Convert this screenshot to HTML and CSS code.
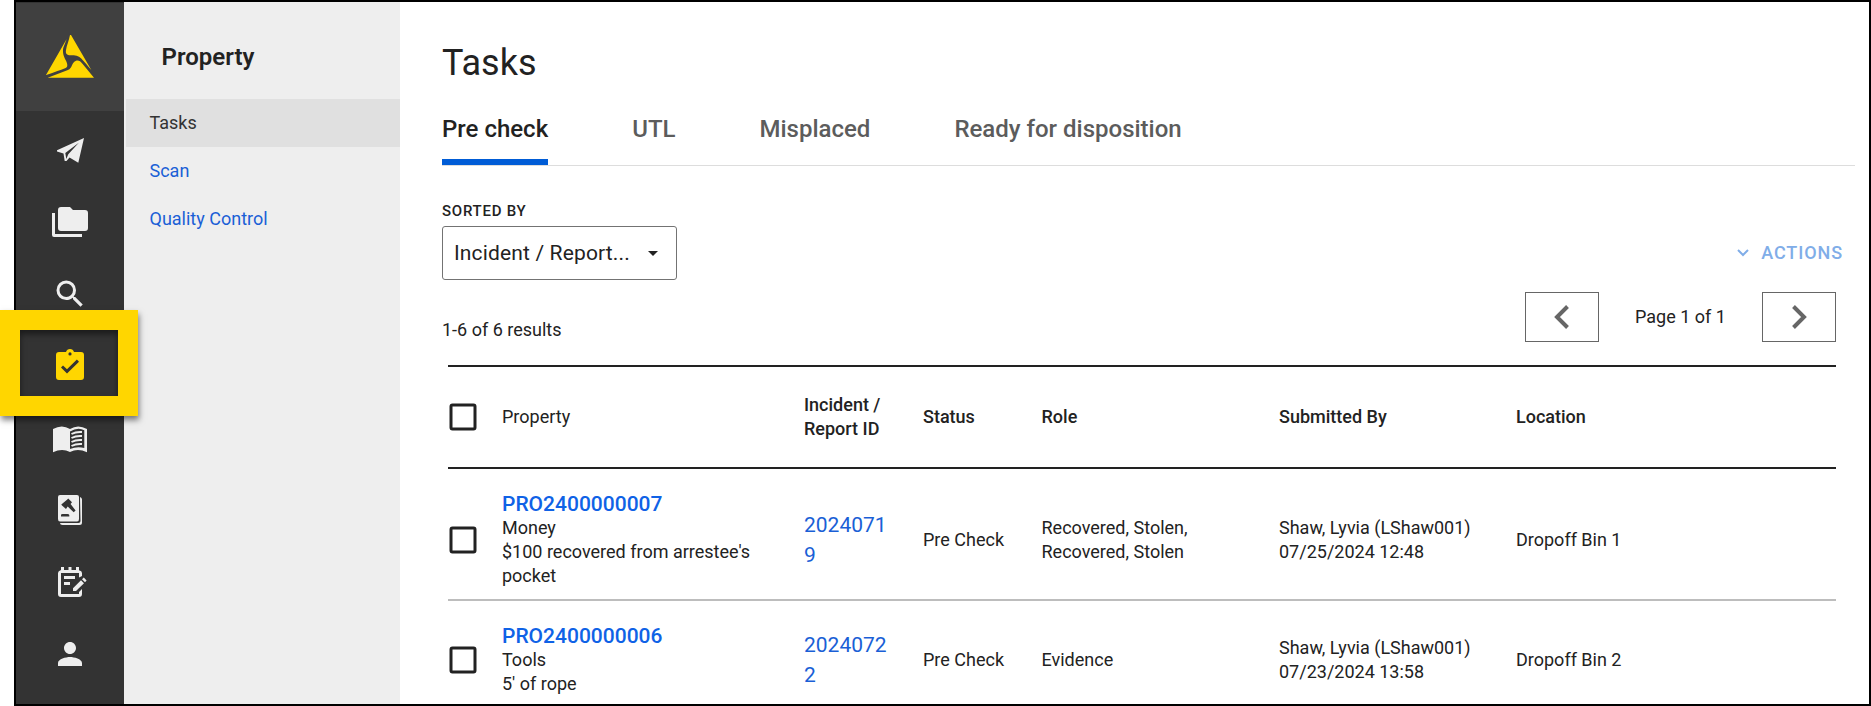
FILE: index.html
```html
<!DOCTYPE html>
<html lang="en">
<head>
<meta charset="utf-8">
<title>Property - Tasks</title>
<link rel="stylesheet" href="styles.css">
</head>
<body>
<div class="window">
  <nav class="rail">
    <div class="logo">
      <svg width="48" height="43" viewBox="138 105 144 129"><path d="M200 117L138 225Q141 225 197 204C204 200 203 193 198 182C189 167 186 150 192 138Z"/><path d="M213 105L274 210C262 198 252 183 243 175C236 167 225 166 212 166C200 166 196 160 198 150C200 137 207 122 210 105Z"/><path d="M143 233.500H282L248 192C241 183 236 180 228 182C220 185 217 193 214 200C211 206 207 209 198 212Z"/></svg>
    </div>
    <a class="rail-item"><svg class="icon" viewBox="0 0 36 36"><path d="M32 6L5 18.300V19.500L11.500 21.500 12.700 29H14.500L17.500 25.500 26.300 30.800ZM26.800 10.800L16.300 22.300 14.300 27 13.300 21Z" fill-rule="evenodd"/></svg></a>
    <a class="rail-item"><svg class="icon" viewBox="0 0 36 36"><path d="M0 9H3V30H30V33H2Q0 33 0 31Z"/><path d="M9 3H18L21 6H33Q36 6 36 9V24Q36 27 33 27H9Q6 27 6 24V6Q6 3 9 3Z"/></svg></a>
    <a class="rail-item"><svg class="icon" viewBox="0 0 24 24"><path d="M15.500 14h-.79l-.28-.27A6.470 6.470 0 0 0 16 9.500 6.500 6.500 0 1 0 9.500 16c1.610 0 3.090-.59 4.230-1.570l.27.28v.79l5 4.990L20.490 19l-4.990-5zm-6 0a4.500 4.500 0 1 1 0-9 4.500 4.500 0 0 1 0 9z"/></svg></a>
    <a class="rail-item rail-active"><svg class="icon" viewBox="0 0 36 36"><path fill-rule="evenodd" d="M7 4H14A4.200 4.200 0 0 1 22 4H29Q32 4 32 7V29Q32 32 29 32H7Q4 32 4 29V7Q4 4 7 4ZM18 4.300A1.600 1.600 0 1 0 18 7.500A1.600 1.600 0 1 0 18 4.300ZM11 17.500L9 19.600 15 25.500 27 13.700 24.900 11.600 15 21.300Z"/></svg></a>
    <a class="rail-item"><svg class="icon" viewBox="0 0 36 36"><path fill-rule="evenodd" d="M1 9Q10 4 18 9Q26 4 35 9V32.300Q26 28 18 32Q10 28 1 32.300ZM18 11.500Q26 6.500 32.300 10.300V28Q25 26 18 29Z"/><path class="lines" d="M19.500 14Q24 11.500 30 12M19.500 18Q24 15.500 30 16M19.500 22Q24 19.500 30 20M19.500 26Q24 23.500 30 24"/></svg></a>
    <a class="rail-item"><svg class="icon" viewBox="0 0 36 36"><path fill-rule="evenodd" d="M8 3H25Q27 3 27 5V27Q27 29.500 25 29.500H8Q6 29.500 6 27V5Q6 3 8 3ZM16.200 6.600L20 10.200 18.600 12 23.600 18.600 21.700 20.300 15.700 14.600 14 17 10 13.400 9.300 12.500 15.300 7.500ZM9 24.500V23Q9 22 10.500 22H15.500Q17 22 17.300 23V24.500Z"/><path d="M28 5Q30 5.500 30 7.500V30.500Q30 33 27.500 33H10.500Q8 33 8 31H26.500Q28.500 31 28.500 29Z"/></svg></a>
    <a class="rail-item"><svg class="icon" viewBox="0 0 36 36"><path d="M9 3h3v3h4.500V3h3v3H24V3h3v3.200Q30 7 30 9V12L27 13.500V9H9V30H27V28L30 25V30Q30 33 27 33H9Q6 33 6 30V9Q6 7 9 6ZM12 12H23V15H12ZM12 18H18V21H12ZM21 24.200L29 16.200 32 19.200 24 27H21ZM30 15.200L31.800 13.600 34.600 16.400 33 18.200Z"/></svg></a>
    <a class="rail-item"><svg class="icon" viewBox="0 0 24 24"><path d="M12 12c2.210 0 4-1.790 4-4s-1.790-4-4-4-4 1.790-4 4 1.790 4 4 4zm0 2c-2.670 0-8 1.340-8 4v2h16v-2c0-2.660-5.330-4-8-4z"/></svg></a>
  </nav>

  <aside class="side">
    <h2 class="side-title">Property</h2>
    <a class="side-link side-current">Tasks</a>
    <a class="side-link">Scan</a>
    <a class="side-link">Quality Control</a>
  </aside>

  <main class="main">
    <h1 class="title">Tasks</h1>
    <div class="tabs">
      <a class="tab tab-current">Pre check</a>
      <a class="tab">UTL</a>
      <a class="tab">Misplaced</a>
      <a class="tab">Ready for disposition</a>
    </div>

    <div class="toolbar">
      <div class="sort">
        <div class="sort-label">SORTED BY</div>
        <div class="select"><span>Incident / Report...</span><svg width="10" height="5" viewBox="0 0 10 5"><path d="M0 0H10L5 5Z"/></svg></div>
      </div>
      <div class="actions"><svg width="12" height="8" viewBox="0 0 12 8"><path d="M1 1L6 6 11 1"/></svg><span>ACTIONS</span></div>
    </div>

    <div class="results">
      <div class="count">1-6 of 6 results</div>
      <div class="pager">
        <button class="page-btn"><svg width="16" height="24" viewBox="0 0 16 24"><path d="M13.500 1.500L3 12 13.500 22.500"/></svg></button>
        <span class="page-text">Page 1 of 1</span>
        <button class="page-btn"><svg width="16" height="24" viewBox="0 0 16 24"><path d="M2.500 1.500L13 12 2.500 22.500"/></svg></button>
      </div>
    </div>

    <div class="table">
      <div class="row head">
        <div><svg class="box" viewBox="0 0 30 30"><rect x="3" y="3" width="24" height="24" rx="1.500"/></svg></div>
        <div class="plain">Property</div>
        <div>Incident /<br>Report ID</div>
        <div>Status</div>
        <div>Role</div>
        <div>Submitted By</div>
        <div>Location</div>
      </div>
      <div class="row">
        <div><svg class="box" viewBox="0 0 30 30"><rect x="3" y="3" width="24" height="24" rx="1.500"/></svg></div>
        <div><a class="prop-id">PRO2400000007</a>Money<br>$100 recovered from arrestee's<br>pocket</div>
        <div><a class="report-id">20240719</a></div>
        <div>Pre Check</div>
        <div>Recovered, Stolen,<br>Recovered, Stolen</div>
        <div>Shaw, Lyvia (LShaw001)<br>07/25/2024 12:48</div>
        <div>Dropoff Bin 1</div>
      </div>
      <div class="row">
        <div><svg class="box" viewBox="0 0 30 30"><rect x="3" y="3" width="24" height="24" rx="1.500"/></svg></div>
        <div><a class="prop-id">PRO2400000006</a>Tools<br>5' of rope</div>
        <div><a class="report-id">20240722</a></div>
        <div>Pre Check</div>
        <div>Evidence</div>
        <div>Shaw, Lyvia (LShaw001)<br>07/23/2024 13:58</div>
        <div>Dropoff Bin 2</div>
      </div>
    </div>
  </main>
</div>
<div class="callout"></div>
</body>
</html>
```
FILE: styles.css
```css
* { box-sizing: border-box; }
body {
  margin: 0;
  height: 706px;
  overflow: hidden;
  position: relative;
  padding-left: 14px;
  background: #fff;
  color: #222;
  font: 18px/24px Roboto, sans-serif;
}
h1, h2 { margin: 0; }
.window {
  display: flex;
  height: 706px;
  border: 2px solid #000;
  overflow: hidden;
}

/* icon rail */
.rail { width: 108px; flex: none; padding-top: 1px; background: #333; }
.logo {
  height: 108px;
  margin-bottom: 3px;
  padding: 32px 0 0 30px;
  background: #404040;
  fill: #ffd600;
}
.logo svg { display: block; }
.rail-item {
  display: flex;
  align-items: center;
  justify-content: center;
  height: 72px;
  fill: #eee;
}
.rail-active { fill: #ffd600; }
.icon { width: 36px; height: 36px; }
.lines { fill: none; stroke: #eee; stroke-width: 2; }

/* section menu */
.side { width: 276px; flex: none; padding-left: 2px; background: #eee; }
.side-title {
  height: 97px;
  padding: 39px 0 0 35.5px;
  font-size: 24px;
  line-height: 32px;
  font-weight: 600;
}
.side-link {
  display: block;
  height: 48px;
  padding-left: 23.5px;
  line-height: 48px;
  color: #1a5fd6;
}
.side-current { background: #e0e0e0; color: #333; }

/* content */
.main { flex: 1; min-width: 0; padding: 37px 14px 0 42px; }
.title { font-size: 36px; line-height: 48px; font-weight: 400; }
.tabs {
  display: flex;
  gap: 84px;
  height: 79px;
  border-bottom: 1px solid #ddd;
  font-size: 24px;
  line-height: 32px;
  font-weight: 500;
  color: #5c5c5c;
}
.tab { height: 78px; padding-top: 26px; white-space: nowrap; }
.tab-current { border-bottom: 6px solid #005cd6; color: #222; }
.toolbar {
  display: flex;
  justify-content: space-between;
  align-items: flex-end;
  height: 114px;
  padding-right: 12px;
}
.sort-label {
  font-size: 15px;
  line-height: 20px;
  font-weight: 500;
  letter-spacing: 0.75px;
  margin-bottom: 5px;
}
.select {
  display: flex;
  align-items: center;
  justify-content: space-between;
  width: 235px;
  height: 54px;
  padding: 0 18px 0 11px;
  border: 1.5px solid #737373;
  border-radius: 3px;
  font-size: 21px;
  letter-spacing: 0.15px;
}
.select svg { fill: #222; }
.actions {
  display: flex;
  align-items: center;
  gap: 12px;
  height: 54px;
  color: #80ade8;
  font-weight: 500;
  letter-spacing: 0.9px;
}
.actions svg { fill: none; stroke: #80ade8; stroke-width: 2; }
.results {
  display: flex;
  justify-content: space-between;
  height: 85px;
  padding: 12px 19px 0 0;
}
.count { padding-top: 26px; }
.pager { display: flex; justify-content: space-between; width: 311px; }
.page-btn {
  display: flex;
  align-items: center;
  justify-content: center;
  width: 74px;
  height: 50px;
  padding: 0;
  border: 1px solid #666;
  background: #fff;
}
.page-btn svg { fill: none; stroke: #666; stroke-width: 4; }
.page-text { line-height: 50px; }

/* table */
.table { margin: 0 19px 0 6px; border-top: 2px solid #222; }
.row {
  display: grid;
  grid-template-columns: 54px 302px 119px 118.5px 237.5px 237px 1fr;
  align-items: center;
  padding: 23px 0 11px;
  border-bottom: 2px solid #bdbdbd;
}
.head {
  height: 102px;
  padding: 0;
  border-bottom-color: #222;
  font-weight: 500;
}
.plain { font-weight: 400; }
.box {
  display: block;
  width: 30px;
  height: 30px;
  fill: none;
  stroke: #222;
  stroke-width: 3;
}
.prop-id {
  display: block;
  font-size: 21px;
  font-weight: 500;
  color: #0f62e6;
}
.report-id {
  display: block;
  width: 86px;
  font-size: 21px;
  line-height: 30px;
  word-break: break-all;
  color: #1a5fd6;
}

/* highlight over the active rail item */
.callout {
  position: absolute;
  left: 0;
  top: 310px;
  width: 138px;
  height: 106px;
  border: 20px solid #ffd600;
  box-shadow: 1px 4px 6px rgba(0, 0, 0, 0.5), inset 0 4px 6px rgba(0, 0, 0, 0.5);
}
```
